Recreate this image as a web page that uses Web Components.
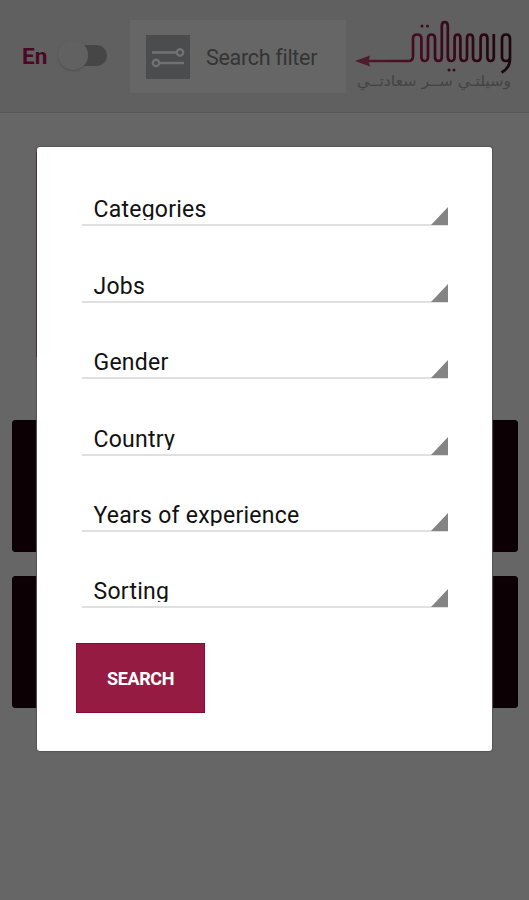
<!DOCTYPE html>
<html lang="en"><head><meta charset="utf-8"><title>Search filter</title>
<style>body{margin:0;background:#666;font-family:Roboto,"Noto Sans",sans-serif;overflow:hidden}</style></head>
<body><filter-page></filter-page>
<script>
const define=(name,html)=>customElements.define(name,class extends HTMLElement{
  constructor(){super();this.attachShadow({mode:'open'}).innerHTML=html;}
});
define('lang-toggle',`<style>
:host{display:flex;align-items:center;width:108px;padding-left:22px;box-sizing:border-box;color:#4b0825;font-size:22.5px;font-weight:700;line-height:28px}
span{width:36px;padding-top:1px}.track{width:33px;height:21px;margin-left:16px;border-radius:11px;background:#464646;position:relative}
.track::after{content:"";position:absolute;left:-16px;top:-5px;width:30px;height:30px;border-radius:50%;background:#616161;box-shadow:0 1px 2px #505050}
</style><span><slot></slot></span><div class="track"></div>`);
define('filter-button',`<style>
:host{display:flex;align-items:center;box-sizing:border-box;width:216px;height:73px;padding-left:16px;background:#666;color:#343434;font-size:21.5px;line-height:30px;letter-spacing:-.3px}
svg{width:44px;height:44px;margin-right:16px}span{padding-top:2px}
</style><svg viewBox="0 0 44 44"><rect width="44" height="44" fill="#4a4c4d"/><g fill="none" stroke="#707171" stroke-width="2.4"><path d="M6 17.5H30M14 28H38"/><circle cx="34" cy="17.5" r="3.2"/><circle cx="10" cy="28" r="3.2"/></g></svg><span><slot></slot></span>`);
define('brand-logo',`<style>:host{display:block;width:184px;height:96px}svg{display:block}text{font-family:"DejaVu Sans",sans-serif}</style>
<svg width="184" height="96" viewBox="345 0 184 96">
<defs><linearGradient id="g" gradientUnits="userSpaceOnUse" x1="355" y1="0" x2="511" y2="0"><stop offset="0" stop-color="#501b2d"/><stop offset=".45" stop-color="#43091f"/><stop offset="1" stop-color="#1d060d"/></linearGradient></defs>
<path d="M355 61L370 55.5L368.5 61L370 66.5Z" fill="#501b2d"/>
<path d="M368 61H408.500Q413 61 413 56V38.500Q413 34.500 417.200 34.500T421.400 38.500V57Q421.400 61 424.700 61T428 57V38.500Q428 34.500 431.500 34.500T435 38.500V57Q435 61 438.400 61T441.800 57V26Q441.800 22 444.800 22T447.800 26V57Q447.800 61 451.200 61T454.600 57V38.500Q454.600 34.500 457.500 34.500T460.400 38.500V57Q460.400 61 463.700 61T467 57V38.500Q467 34.500 470 34.500T473 38.500V57Q473 61 476.800 61T480.600 57V38.500Q480.600 34.500 484 34.500T487.400 38.500V57Q487.400 61 490.600 61T493.800 57V34M510 57Q510 61 506 61T502 57V39Q502 34.500 506 34.500T510 39V59Q510 68 501.500 72.500" fill="none" stroke="url(#g)" stroke-width="2.7"/>
<g fill="#3d0b1e"><circle cx="422" cy="26" r="1.5"/><circle cx="427.500" cy="26" r="1.500"/><circle cx="449" cy="70" r="1.500"/><circle cx="454" cy="70" r="1.500"/></g>
<text x="434" y="86" text-anchor="middle" font-size="15" fill="#444" direction="rtl" textLength="154" lengthAdjust="spacingAndGlyphs">وسيلتـي ســر سعادتــي</text></svg>`);
define('app-header',`<style>
:host{display:flex;align-items:flex-start;height:112px;background:#606060;border-bottom:1px solid #585858;box-sizing:content-box}
lang-toggle{margin-top:41px;margin-right:22px}filter-button{margin-top:20px}brand-logo{margin-left:-1px;flex:none}
</style><lang-toggle>En</lang-toggle><filter-button>Search filter</filter-button><brand-logo></brand-logo>`);
define('dim-card',`<style>:host{display:block;height:132px;background:#0d0004;border:1px solid #050001;box-sizing:border-box;border-radius:3px}</style>`);
define('select-row',`<style>
:host{display:flex;align-items:flex-end;justify-content:space-between;box-sizing:border-box;height:76.4px;border-bottom:2px solid #e0e0e0;color:#111;font-size:23px}
.label{height:24px;line-height:27px;padding-left:11.5px;margin-bottom:4px;overflow:hidden;white-space:nowrap;letter-spacing:.25px}
svg{width:17px;height:18px;margin-bottom:-1px}
</style><div class="label"><slot></slot></div><svg viewBox="0 0 17 18"><path d="M17 0V18H0Z" fill="#848484"/></svg>`);
define('search-button',`<style>
:host{display:block}button{display:block;width:129px;height:70px;padding:1px 0 0;background:#951b43;border:1px solid #8c0a35;color:#fff;font:700 18px Roboto,sans-serif;letter-spacing:-.4px}
</style><button><slot></slot></button>`);
define('filter-dialog',`<style>
:host{display:block;box-sizing:border-box;background:#fff;border-radius:3px;box-shadow:0 0 1px 1px #555;padding:3px 44px 0 45px}
search-button{margin:35px 0 0 -6px}
</style><slot></slot><search-button>SEARCH</search-button>`);
define('filter-page',`<style>
:host{display:block;position:relative;width:529px;height:900px;background:#666;overflow:hidden}
.banner{height:205px;margin:39px 36px 63px;border-left:2px solid #493039;border-radius:3px}
.cards{display:grid;gap:24px;padding:0 11px 0 12px}
filter-dialog{position:absolute;left:37px;top:147px;width:455px;height:604px}
.edge{position:absolute;left:36px;top:152px;width:1px;height:205px;background:#493039}
</style><app-header></app-header><div class="banner"></div><div class="cards"><dim-card></dim-card><dim-card></dim-card></div>
<filter-dialog><select-row>Categories</select-row><select-row>Jobs</select-row><select-row>Gender</select-row><select-row>Country</select-row><select-row>Years of experience</select-row><select-row>Sorting</select-row></filter-dialog><div class="edge"></div>`);
</script></body></html>
